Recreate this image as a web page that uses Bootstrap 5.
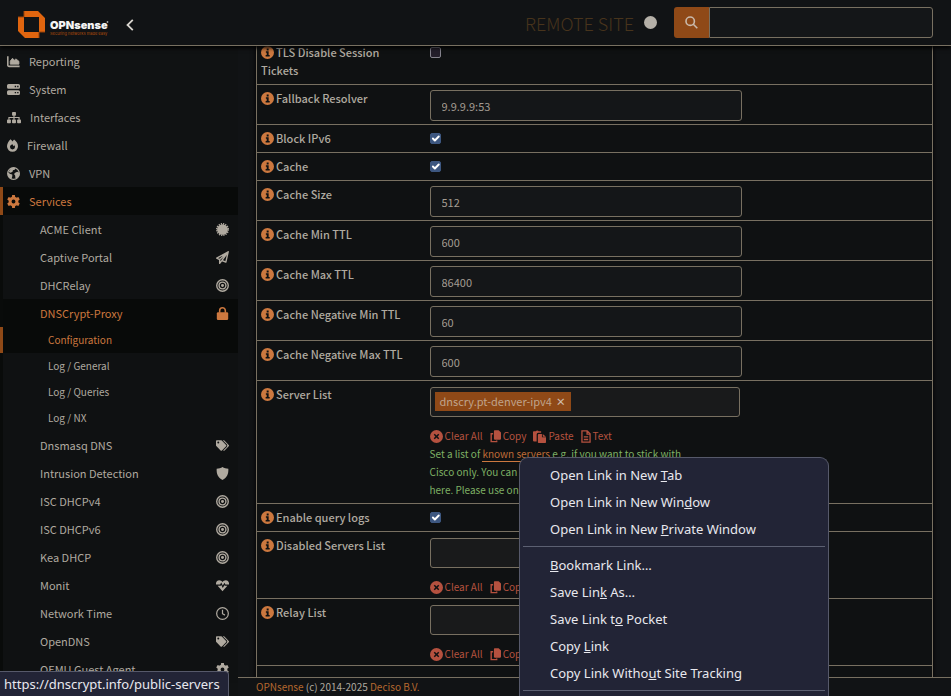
<!DOCTYPE html>
<html lang="en" data-bs-theme="dark">
<head>
<meta charset="utf-8">
<meta name="viewport" content="width=device-width, initial-scale=1">
<title>DNSCrypt-Proxy | Services | OPNsense</title>
<link href="https://cdn.jsdelivr.net/npm/bootstrap@5.3.0/dist/css/bootstrap.min.css" rel="stylesheet">
<style>
:root{--line:#787061;--txt:#b0aaa0;--accent:#cc783f;--brand:#8f4917;--red:#b5513f;--pop:#222436}
body{background:#111315;color:var(--txt);font:11px/18px "Noto Sans CJK SC","Noto Sans",sans-serif}
a{color:inherit;text-decoration:none}
svg{fill:currentColor;flex:none;display:block}
.topbar{height:46px;border-bottom:1px solid var(--line);background:#111315;box-shadow:0 2px 4px #000;z-index:2;padding:0 18px}
.toggle{color:#d8d4ce}
.site{font:300 18px/24px "Noto Sans CJK SC","Noto Sans",sans-serif;color:#48341c;margin-right:10px}
.dot{width:13px;height:13px;background:#b5b0a8;margin-right:17px}
.search{width:259px;height:31px}
.search .btn{width:35px;flex:none;background:var(--brand);color:#c9b9ab;border:0;border-radius:3px 0 0 3px}
.field{background:#141618;border:1px solid var(--line);border-radius:3px;color:#a39c92;font-size:11px;line-height:18px;padding:5px 11px}
.field:focus{background:#141618;color:var(--txt);box-shadow:none;border-color:var(--accent)}
.side{width:238px;background:#101213;padding-top:1px}
.side a{height:28px;line-height:28px;border-left:3px solid transparent}
.side .top-item{padding-left:4px;gap:9px}
.side .sub{background:#0f1112}
.side .sub a{border-left-color:#090b0a;padding-left:37px;padding-right:9px}
.side .sub .leaf{height:26px;line-height:26px;font-size:10px;padding-left:45px}
.side a.on,.side .sub a.on{background:#080a09;color:var(--accent)}
.side a.mark-on,.side .sub a.mark-on{border-left-color:var(--brand)}
.pane{padding:0 18px}
.settings{width:100%;margin-top:-8px;border:1px solid var(--line);background:#0f1112;box-shadow:0 0 5px #000}
.settings th,.settings td{vertical-align:top;padding:5px 4px 4px;border-bottom:1px solid var(--line)}
.settings th{width:25%;font-weight:500;padding-top:4px;padding-bottom:5px}
.settings label{display:inline}
.settings .textrow td{padding-bottom:3px}
.settings .listrow td{padding-bottom:2px}
.settings .field{width:312px;height:31px;max-width:100%}
.settings .tokens{width:310px;height:30px;background:#191a1b;padding:4px;margin-top:1px}
.info{color:var(--accent);display:inline-block;vertical-align:-2px;margin-right:2px}
.form-check-input.tick{width:11px;height:11px;margin:3px 0 0;border:1px solid #85838d;border-radius:2px;background-color:#241f2b;display:block;float:none}
.form-check-input.tick:checked{background-color:#3d5780;border-color:#3d5780;background-size:13px 13px}
.token{background:var(--brand);color:#c0a48c;height:19px;line-height:19px;padding:0 5px;gap:4px}
.token button{line-height:19px;color:#d0bfae;font-size:10px;font-weight:700}
.acts{margin-top:10px;gap:7px;color:var(--red);font-size:10px;line-height:18px;height:18px}
.acts button{color:inherit;gap:2px}
.plain{background:none;border:0;padding:0}
.hint{color:#7eb064;font-size:10px;line-height:18px;white-space:nowrap;margin-bottom:2px}
.hint a{color:#bf6c37;border-bottom:1px solid var(--accent)}
.foot{border-top:1px solid var(--line);font-size:10px;line-height:18px;padding:0 18px;background:#111315;z-index:1}
.foot a{color:#b5682f}
.popfont{font-family:"Noto Sans",sans-serif;font-size:13px;color:#e8e8ee;background:var(--pop);border:1px solid #56596a}
.status{left:0;bottom:0;height:25px;line-height:24px;padding:0 8px 0 4px;border-width:1px 1px 0 0;border-radius:0 4px 0 0;z-index:5}
.ctx{left:519px;top:457px;width:310px;border-radius:9px 9px 0 0;padding:4px 3px 8px;border-bottom:0;z-index:6}
.ctx button{display:block;width:100%;text-align:left;height:27px;line-height:25px;padding-left:27px;color:inherit}
.ctx hr{margin:3px 0 5px;border-color:#5c6072;opacity:1}
</style>
<script src="https://cdn.jsdelivr.net/npm/bootstrap@5.3.0/dist/js/bootstrap.bundle.min.js"></script>
</head>
<body class="vh-100 overflow-hidden d-flex flex-column position-relative">
<svg class="d-none">
<symbol id="i-info" viewBox="0 0 16 16"><path fill-rule="evenodd" d="M8 0a8 8 0 1 0 0 16A8 8 0 0 0 8 0zM7 3h2.400v2.400H7zM6 6.500h3.400v4.700H10.700V13H5.700v-1.800H7V8.300H6z"/></symbol>
<symbol id="i-clear" viewBox="0 0 16 16"><path fill-rule="evenodd" d="M8 0a8 8 0 1 0 0 16A8 8 0 0 0 8 0zM5.900 4.600 8 6.700l2.100-2.100 1.300 1.300L9.300 8l2.100 2.100-1.300 1.300L8 9.300l-2.100 2.100-1.300-1.300L6.700 8 4.600 5.900z"/></symbol>
<symbol id="i-copy" viewBox="0 0 14 16"><path d="M6 0h5l3 3v8a1 1 0 0 1-1 1H6a1 1 0 0 1-1-1V1a1 1 0 0 1 1-1z"/><path d="M4 4.500H1.500v10h7V13" fill="none" stroke="currentColor" stroke-width="1.800"/></symbol>
<symbol id="i-paste" viewBox="0 0 16 16"><path d="M1 1.500h2.500a2 2 0 0 1 3.500 0h3V3.500H6.500a2 2 0 0 0-2 2V14H1a1 1 0 0 1-1-1V2.500a1 1 0 0 1 1-1z"/><path d="M7 5h4v4h5v6a1 1 0 0 1-1 1H7a1 1 0 0 1-1-1V6a1 1 0 0 1 1-1zM12 5l4 3.300h-4z"/></symbol>
<symbol id="i-text" viewBox="0 0 12 16"><path d="M1 1h6.500L11 4.500V15H1zM7.300 1v4H11M3.300 8.500h5.400M3.300 11.700h5.400" fill="none" stroke="currentColor" stroke-width="1.600"/></symbol>
<symbol id="i-chart" viewBox="0 0 16 16"><path d="M1 1.500v11a1.500 1.500 0 0 0 1.500 1.500H15.500" fill="none" stroke="currentColor" stroke-width="1.900"/><path d="M4 11.300V7.500L6.800 4l2.200 2.400L11 4.800l3.700 3v3.500z" stroke="currentColor" stroke-linejoin="round"/></symbol>
<symbol id="i-server" viewBox="0 0 16 16"><path fill-rule="evenodd" d="M2 1.200h12a2 2 0 0 1 2 2v2a2 2 0 0 1-2 2H2a2 2 0 0 1-2-2v-2a2 2 0 0 1 2-2zM9.500 3.400v1.700h1.700V3.400zM12.500 3.400v1.700h1.700V3.400zM2 8.800h12a2 2 0 0 1 2 2v2a2 2 0 0 1-2 2H2a2 2 0 0 1-2-2v-2a2 2 0 0 1 2-2zM9.500 11v1.700h1.700V11zM12.500 11v1.700h1.700V11z"/></symbol>
<symbol id="i-map" viewBox="0 0 18 16"><rect x="6.500" y=".8" width="5" height="5" rx="1"/><rect x="0" y="10.500" width="5" height="4.800" rx="1"/><rect x="6.500" y="10.500" width="5" height="4.800" rx="1"/><rect x="13" y="10.500" width="5" height="4.800" rx="1"/><path d="M9 5v6M2.500 11V8h13v3" fill="none" stroke="currentColor" stroke-width="1.500"/></symbol>
<symbol id="i-fire" viewBox="0 0 14 16"><path fill-rule="evenodd" d="M4.500.2c1 .8 1.700 1.600 2.500 2.600C7.500 2 8.200 1.200 9 .5c3 2.300 5 5.300 5 8.500a7 7 0 0 1-14 0C0 6 2 2.800 4.500.2zM7 6.500C5 7 3.800 8.500 3.800 10A3.200 3.200 0 0 0 7 13 3.200 3.200 0 0 0 10.200 10c0-.8-.3-1.600-.8-2.200L8.300 8.800z"/></symbol>
<symbol id="i-globe" viewBox="0 0 16 16"><circle cx="8" cy="8" r="7.200" fill="none" stroke="currentColor" stroke-width="1.500"/><path d="M1 6.500 4 8.500l2.500.8v2L5.500 15C3 14.500 1 12 1 8zM5 1.200 10 .8 9.600 3.500 7.300 4l-.5 1.800L4.500 7 2 6.200zM9.500 7.500l3-1.800L15.300 7v3L12 14H10.400L10 10.500 8.800 9z"/></symbol>
<symbol id="i-gear" viewBox="0 0 16 16"><circle cx="8" cy="8" r="4.200" fill="none" stroke="currentColor" stroke-width="3.600"/><path d="M6.300.1h3.400l.5 3.400H5.800z"/><path d="M6.300.1h3.400l.5 3.400H5.800z" transform="rotate(60 8 8)"/><path d="M6.300.1h3.400l.5 3.400H5.800z" transform="rotate(120 8 8)"/><path d="M6.300.1h3.400l.5 3.400H5.800z" transform="rotate(180 8 8)"/><path d="M6.300.1h3.400l.5 3.400H5.800z" transform="rotate(240 8 8)"/><path d="M6.300.1h3.400l.5 3.400H5.800z" transform="rotate(300 8 8)"/></symbol>
<symbol id="i-cert" viewBox="0 0 16 16"><circle cx="8" cy="8" r="6.600"/><circle cx="8" cy="8" r="7" fill="none" stroke="currentColor" stroke-width="2" pathLength="32" stroke-dasharray="1.100 .9"/></symbol>
<symbol id="i-plane" viewBox="0 0 16 16"><path d="M15 1 .9 8.800l3.600 1.700v4.700l2.700-3.500 4.900 2zM4.500 10.500 15 1 7.200 11.700" fill="none" stroke="currentColor" stroke-width="1.700" stroke-linejoin="round"/></symbol>
<symbol id="i-target" viewBox="0 0 16 16"><g fill="none" stroke="currentColor" stroke-width="1.700"><circle cx="8" cy="8" r="7.100"/><circle cx="8" cy="8" r="4.200"/></g><circle cx="8" cy="8" r="1.800"/></symbol>
<symbol id="i-lock" viewBox="0 0 16 16"><rect x="1" y="6.500" width="14" height="9.500" rx="1.500"/><path d="M4.500 7V4.500a3.500 3.500 0 0 1 7 0V7" fill="none" stroke="currentColor" stroke-width="1.900"/></symbol>
<symbol id="i-tags" viewBox="0 0 640 512"><path d="M498 226 286 14A48 48 0 0 0 252 0H48C21 0 0 21 0 48v204a48 48 0 0 0 14 34l212 212c19 19 49 19 68 0l204-204c19-19 19-49 0-68zM112 160a48 48 0 1 1 0-96 48 48 0 0 1 0 96zm514 134L422 498c-19 19-49 19-68 0l174-174c35-35 35-93 0-128L331 0h49a48 48 0 0 1 34 14l212 212c19 19 19 49 0 68z"/></symbol>
<symbol id="i-shield" viewBox="0 0 16 16"><path d="M8 0c2 1.200 4.500 2 7.200 2.200C15.500 8.500 13.500 13.500 8 16 2.500 13.500.5 8.500.8 2.200 3.500 2 6 1.200 8 0z"/></symbol>
<symbol id="i-heart" viewBox="0 0 16 16"><path d="M0 6.700C-.4 3.500 1.500 1.500 4 1.500c1.700 0 3 .9 4 2.200 1-1.300 2.300-2.200 4-2.200 2.500 0 4.400 2 4 5.200h-4.500l-1-2L8.300 8 6.500 4.200 5 6.700zM2 8.300h4l.6-1L8.300 11l2.300-3.500.3.800H14L8 15z"/></symbol>
<symbol id="i-clock" viewBox="0 0 16 16"><g fill="none" stroke="currentColor" stroke-width="1.500"><circle cx="8" cy="8" r="7.200"/><path d="M8 3.500V8.300l3 1.700"/></g></symbol>
</svg>

<header class="topbar d-flex align-items-center position-relative flex-shrink-0">
<a href="#" aria-label="OPNsense">
<svg width="92" height="32" viewBox="0 -4 92 32"><path fill="#e0650f" fill-rule="evenodd" d="M6 0H20L27 7V21H21V27H7L0 20V6H6zM6 6V21H21V6z"/><path d="M6 0v6H0M27 21h-6v6" fill="none" stroke="#9b450b"/>
<text x="32" y="18" font-family="Inter,sans-serif" font-weight="900" font-size="11" fill="#f4f4f4">OPNsense</text><circle cx="89.500" cy="11" r=".9" fill="#aaa"/><text x="32" y="24" font-family="Inter,sans-serif" font-size="4" fill="#b34d0b">Securing networks made easy</text></svg></a>
<button type="button" class="plain toggle ms-3 mt-1" aria-label="Collapse menu"><svg width="8" height="12" viewBox="0 0 8 12"><path d="M6.800.8 1.500 6l5.300 5.200" fill="none" stroke="currentColor" stroke-width="1.800"/></svg></button>
<div class="ms-auto d-flex align-items-center">
<span class="site">REMOTE SITE</span><span class="dot rounded-circle"></span>
<form class="search d-flex"><button type="button" class="btn p-0 d-flex align-items-center justify-content-center" aria-label="Search"><svg width="13" height="13" viewBox="0 0 13 13"><g fill="none" stroke="currentColor" stroke-width="1.600"><circle cx="5.200" cy="5.200" r="4.200"/><path d="m8.300 8.300 4 4"/></g></svg></button><input class="form-control field rounded-start-0" type="text" aria-label="Search"></form>
</div>
</header>

<div class="d-flex flex-grow-1 overflow-hidden">
<nav class="side flex-shrink-0 overflow-hidden">
<a href="#" class="top-item d-flex align-items-center"><svg width="13" height="13"><use href="#i-chart"/></svg>Reporting</a>
<a href="#" class="top-item d-flex align-items-center"><svg width="13" height="13"><use href="#i-server"/></svg>System</a>
<a href="#" class="top-item d-flex align-items-center"><svg width="14" height="13"><use href="#i-map"/></svg>Interfaces</a>
<a href="#" class="top-item d-flex align-items-center"><svg width="11" height="13"><use href="#i-fire"/></svg>Firewall</a>
<a href="#" class="top-item d-flex align-items-center"><svg width="13" height="13"><use href="#i-globe"/></svg>VPN</a>
<a href="#" class="top-item d-flex align-items-center on mark-on"><svg width="13" height="13"><use href="#i-gear"/></svg>Services</a>
<div class="sub">
<a href="#" class="d-flex align-items-center justify-content-between">ACME Client<svg width="13" height="13"><use href="#i-cert"/></svg></a>
<a href="#" class="d-flex align-items-center justify-content-between">Captive Portal<svg width="13" height="13"><use href="#i-plane"/></svg></a>
<a href="#" class="d-flex align-items-center justify-content-between">DHCRelay<svg width="13" height="13"><use href="#i-target"/></svg></a>
<a href="#" class="d-flex align-items-center justify-content-between on">DNSCrypt-Proxy<svg width="13" height="13"><use href="#i-lock"/></svg></a>
<a href="#" class="leaf d-block on mark-on">Configuration</a>
<a href="#" class="leaf d-block">Log / General</a>
<a href="#" class="leaf d-block">Log / Queries</a>
<a href="#" class="leaf d-block">Log / NX</a>
<a href="#" class="d-flex align-items-center justify-content-between">Dnsmasq DNS<svg width="13" height="13"><use href="#i-tags"/></svg></a>
<a href="#" class="d-flex align-items-center justify-content-between">Intrusion Detection<svg width="13" height="13"><use href="#i-shield"/></svg></a>
<a href="#" class="d-flex align-items-center justify-content-between">ISC DHCPv4<svg width="13" height="13"><use href="#i-target"/></svg></a>
<a href="#" class="d-flex align-items-center justify-content-between">ISC DHCPv6<svg width="13" height="13"><use href="#i-target"/></svg></a>
<a href="#" class="d-flex align-items-center justify-content-between">Kea DHCP<svg width="13" height="13"><use href="#i-target"/></svg></a>
<a href="#" class="d-flex align-items-center justify-content-between">Monit<svg width="13" height="13"><use href="#i-heart"/></svg></a>
<a href="#" class="d-flex align-items-center justify-content-between">Network Time<svg width="13" height="13"><use href="#i-clock"/></svg></a>
<a href="#" class="d-flex align-items-center justify-content-between">OpenDNS<svg width="13" height="13"><use href="#i-tags"/></svg></a>
<a href="#" class="d-flex align-items-center justify-content-between">QEMU Guest Agent<svg width="13" height="13"><use href="#i-gear"/></svg></a>
</div>
</nav>

<div class="d-flex flex-column flex-grow-1 overflow-hidden">
<main class="pane flex-grow-1 overflow-hidden">
<table class="settings">
<tr><th scope="row"><svg class="info" width="13" height="13"><use href="#i-info"/></svg><label for="tls">TLS Disable Session<br>Tickets</label></th><td><input id="tls" class="form-check-input tick" type="checkbox"></td></tr>
<tr class="textrow"><th scope="row"><svg class="info" width="13" height="13"><use href="#i-info"/></svg><label for="fb">Fallback Resolver</label></th><td><input id="fb" class="form-control field" type="text" value="9.9.9.9:53"></td></tr>
<tr><th scope="row"><svg class="info" width="13" height="13"><use href="#i-info"/></svg><label for="b6">Block IPv6</label></th><td><input id="b6" class="form-check-input tick" type="checkbox" checked></td></tr>
<tr><th scope="row"><svg class="info" width="13" height="13"><use href="#i-info"/></svg><label for="ca">Cache</label></th><td><input id="ca" class="form-check-input tick" type="checkbox" checked></td></tr>
<tr class="textrow"><th scope="row"><svg class="info" width="13" height="13"><use href="#i-info"/></svg><label for="cs">Cache Size</label></th><td><input id="cs" class="form-control field" type="text" value="512"></td></tr>
<tr class="textrow"><th scope="row"><svg class="info" width="13" height="13"><use href="#i-info"/></svg><label for="c1">Cache Min TTL</label></th><td><input id="c1" class="form-control field" type="text" value="600"></td></tr>
<tr class="textrow"><th scope="row"><svg class="info" width="13" height="13"><use href="#i-info"/></svg><label for="c2">Cache Max TTL</label></th><td><input id="c2" class="form-control field" type="text" value="86400"></td></tr>
<tr class="textrow"><th scope="row"><svg class="info" width="13" height="13"><use href="#i-info"/></svg><label for="c3">Cache Negative Min TTL</label></th><td><input id="c3" class="form-control field" type="text" value="60"></td></tr>
<tr class="textrow"><th scope="row"><svg class="info" width="13" height="13"><use href="#i-info"/></svg><label for="c4">Cache Negative Max TTL</label></th><td><input id="c4" class="form-control field" type="text" value="600"></td></tr>
<tr class="listrow"><th scope="row"><svg class="info" width="13" height="13"><use href="#i-info"/></svg>Server List</th><td>
<div class="field tokens d-flex"><span class="token d-flex">dnscry.pt-denver-ipv4<button type="button" class="plain" aria-label="Remove">×</button></span></div>
<div class="acts d-flex"><button type="button" class="plain d-flex align-items-center"><svg width="13" height="13"><use href="#i-clear"/></svg>Clear All</button><button type="button" class="plain d-flex align-items-center"><svg width="11" height="13"><use href="#i-copy"/></svg>Copy</button><button type="button" class="plain d-flex align-items-center"><svg width="13" height="13"><use href="#i-paste"/></svg>Paste</button><button type="button" class="plain d-flex align-items-center"><svg width="10" height="13"><use href="#i-text"/></svg>Text</button></div>
<div class="hint">Set a list of <a href="#">known servers</a> e.g. if you want to stick with<br>Cisco only. You can add<br>here. Please use on your</div></td></tr>
<tr><th scope="row"><svg class="info" width="13" height="13"><use href="#i-info"/></svg><label for="ql">Enable query logs</label></th><td><input id="ql" class="form-check-input tick" type="checkbox" checked></td></tr>
<tr class="listrow"><th scope="row"><svg class="info" width="13" height="13"><use href="#i-info"/></svg><label for="ds">Disabled Servers List</label></th><td>
<input id="ds" type="text" class="form-control field tokens">
<div class="acts d-flex"><button type="button" class="plain d-flex align-items-center"><svg width="13" height="13"><use href="#i-clear"/></svg>Clear All</button><button type="button" class="plain d-flex align-items-center"><svg width="11" height="13"><use href="#i-copy"/></svg>Copy</button></div></td></tr>
<tr class="listrow"><th scope="row"><svg class="info" width="13" height="13"><use href="#i-info"/></svg><label for="rl">Relay List</label></th><td>
<input id="rl" type="text" class="form-control field tokens">
<div class="acts d-flex"><button type="button" class="plain d-flex align-items-center"><svg width="13" height="13"><use href="#i-clear"/></svg>Clear All</button><button type="button" class="plain d-flex align-items-center"><svg width="11" height="13"><use href="#i-copy"/></svg>Copy</button></div></td></tr>
<tr><td colspan="2" class="pb-5"></td></tr>
</table>
</main>
<footer class="foot flex-shrink-0"><a href="#">OPNsense</a> (c) 2014-2025 <a href="#">Deciso B.V.</a></footer>
</div>
</div>

<div class="status popfont position-absolute">https://dnscrypt.info/public-servers</div>
<div class="ctx popfont position-absolute" role="menu">
<button type="button" class="plain" role="menuitem">Open Link in New <u>T</u>ab</button>
<button type="button" class="plain" role="menuitem">Open Link in New Win<u>d</u>ow</button>
<button type="button" class="plain" role="menuitem">Open Link in New <u>P</u>rivate Window</button>
<hr>
<button type="button" class="plain" role="menuitem"><u>B</u>ookmark Link…</button>
<button type="button" class="plain" role="menuitem">Save Lin<u>k</u> As…</button>
<button type="button" class="plain" role="menuitem">Save Link t<u>o</u> Pocket</button>
<button type="button" class="plain" role="menuitem">Copy <u>L</u>ink</button>
<button type="button" class="plain" role="menuitem">Copy Link Witho<u>u</u>t Site Tracking</button>
<hr>
</div>
</body>
</html>
